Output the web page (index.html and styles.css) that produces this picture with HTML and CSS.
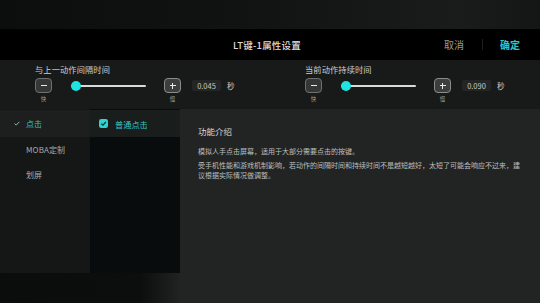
FILE: index.html
```html
<!DOCTYPE html>
<html lang="zh">
<head>
<meta charset="utf-8">
<link rel="stylesheet" href="styles.css">
</head>
<body>
<div class="top"></div>
<div class="header">
  <div></div>
  <div class="title">LT键-1属性设置</div>
  <div class="actions">
    <span class="cancel">取消</span>
    <span class="divider"></span>
    <span class="ok">确定</span>
  </div>
</div>
<div class="sliders">
  <div class="group">
    <div class="label">与上一动作间隔时间</div>
    <div class="controls">
      <div class="btncol"><div class="btn minus"><span></span></div><div class="hint">快</div></div>
      <div class="track"><div class="line"></div><div class="thumb"></div></div>
      <div class="btncol"><div class="btn plus"><span></span></div><div class="hint">慢</div></div>
      <div class="value">0.045</div>
      <div class="unit">秒</div>
    </div>
  </div>
  <div class="group">
    <div class="label">当前动作持续时间</div>
    <div class="controls">
      <div class="btncol"><div class="btn minus"><span></span></div><div class="hint">快</div></div>
      <div class="track"><div class="line"></div><div class="thumb"></div></div>
      <div class="btncol"><div class="btn plus"><span></span></div><div class="hint">慢</div></div>
      <div class="value">0.090</div>
      <div class="unit">秒</div>
    </div>
  </div>
</div>
<div class="main">
  <div class="side">
    <div class="panels">
      <div class="menu">
        <div class="mrow active">
          <svg class="check" width="6" height="5" viewBox="0 0 6 5"><polyline points="0.6,2.6 2.2,4.1 5.4,0.8" fill="none" stroke="#8fb3b0" stroke-width="1"/></svg>
          <span>点击</span>
        </div>
        <div class="mrow"><span>MOBA定制</span></div>
        <div class="mrow"><span>划屏</span></div>
      </div>
      <div class="sub">
        <div class="srow">
          <span class="box"><svg width="9" height="9" viewBox="0 0 9 9"><rect x="0" y="0" width="9" height="9" rx="2.2" fill="#2fd3d3"/><polyline points="2.2,4.6 3.9,6.2 6.9,3" fill="none" stroke="#0e2a2a" stroke-width="1.2"/></svg></span>
          <span>普通点击</span>
        </div>
      </div>
    </div>
    <div class="foot"></div>
  </div>
  <div class="info">
    <div class="info-title">功能介绍</div>
    <p class="p1">模拟人手点击屏幕，适用于大部分需要点击的按键。</p>
    <p class="p2">受手机性能和游戏机制影响，若动作的间隔时间和持续时间不是越短越好，太短了可能会响应不过来，建议根据实际情况做调整。</p>
  </div>
</div>
</body>
</html>
```
FILE: styles.css
```css
* { box-sizing: border-box; }
html, body { margin: 0; padding: 0; }
body {
  width: 540px;
  height: 303px;
  overflow: hidden;
  background: #222423;
  font-family: "Noto Sans CJK SC", "Noto Sans", sans-serif;
  color: #ccc;
}
.top {
  height: 29px;
  background: linear-gradient(90deg, #0c0e0e 0%, #111313 45%, #1a1c1c 85%, #141616 100%);
}
.header {
  height: 31px;
  background: #000;
  display: grid;
  grid-template-columns: 1fr auto 1fr;
  align-items: center;
}
.title {
  font-size: 9.5px;
  color: #dcdcdc;
  letter-spacing: 0.2px;
  margin-right: 6px;
  font-weight: 500;
}
.actions {
  display: flex;
  justify-content: flex-end;
  align-items: center;
  padding-right: 20px;
  font-size: 10px;
}
.cancel { color: #9a9a9a; }
.divider {
  width: 1px;
  height: 11px;
  background: #1f1f1f;
  margin: 0 17px 0 18px;
}
.ok { color: #2fc6c6; font-weight: 700; }

.sliders {
  height: 49px;
  background: #171a19;
  display: flex;
}
.group {
  width: 270px;
  padding: 4px 0 0 35px;
}
.label {
  font-size: 8.2px;
  line-height: 10px;
  color: #d0d0d0;
  letter-spacing: 0.15px;
}
.controls {
  display: flex;
  align-items: flex-start;
  margin-top: 4px;
}
.btncol {
  width: 17px;
  display: flex;
  flex-direction: column;
  align-items: center;
}
.btn {
  width: 17px;
  height: 15px;
  border-radius: 4px;
  border: 1px solid #6e7070;
  background: #353737;
  position: relative;
}
.btn span {
  position: absolute;
  left: 4.5px;
  top: 6px;
  width: 6px;
  height: 1.2px;
  background: #e8e8e8;
}
.plus span::after {
  content: "";
  position: absolute;
  left: 2.4px;
  top: -2.4px;
  width: 1.2px;
  height: 6px;
  background: #e8e8e8;
}
.plus { border-color: #8a8c8c; background: #3c3e3e; }
.hint {
  font-size: 5.5px;
  line-height: 8px;
  margin-top: 2px;
  color: #9a9a9a;
}
.track {
  width: 75px;
  height: 15px;
  margin: 0 18px 0 19px;
  position: relative;
  display: flex;
  align-items: center;
}
.line {
  width: 100%;
  height: 2px;
  background: #d9d9d9;
  border-radius: 1px;
}
.thumb {
  position: absolute;
  left: 0;
  top: 2.5px;
  width: 10px;
  height: 10px;
  border-radius: 50%;
  background: #1de3e3;
}
.value {
  margin: 2px 0 0 11px;
  width: 29px;
  height: 11px;
  background: #232625;
  border-radius: 2px;
  font-size: 7.5px;
  line-height: 11px;
  text-align: center;
  color: #c8c8c8;
}
.unit {
  margin: 2px 0 0 6px;
  font-size: 7.5px;
  line-height: 11px;
  color: #cfcfcf;
}

.main {
  display: flex;
  height: 194px;
}
.side {
  width: 180px;
  display: flex;
  flex-direction: column;
}
.panels {
  height: 164px;
  display: flex;
}
.menu {
  width: 90px;
  background: #151716;
  padding-top: 1px;
}
.mrow {
  height: 25px;
  display: flex;
  align-items: center;
  padding-left: 26px;
  font-size: 8px;
  color: #a9a9a9;
  position: relative;
  letter-spacing: 0.1px;
}
.mrow.active {
  height: 27px;
  background: #1c1f1e;
  color: #35c2c2;
}
.check {
  position: absolute;
  left: 14px;
  top: 11px;
}
.sub {
  width: 90px;
  background: #090c0c;
  padding-top: 1px;
}
.srow {
  height: 27px;
  background: #191d1c;
  display: flex;
  align-items: center;
  padding-left: 9px;
  font-size: 8.2px;
  color: #35c6c6;
}
.box {
  display: flex;
  margin: 0 7px 0 0;
}
.foot {
  flex: 1;
  background: linear-gradient(90deg, #0b0d0c 0%, #0c0e0d 78%, #1c1e1d 95%, #212322 100%);
}
.info {
  flex: 1;
  background: #222423;
  padding: 17px 18px 0 18px;
}
.info-title {
  font-size: 8.5px;
  line-height: 10px;
  color: #dadada;
}
.info p {
  margin: 0;
  font-size: 7px;
  line-height: 10.5px;
  color: #bdbdbd;
}
.p1 { margin-top: 10px !important; }
.p2 { margin-top: 3px !important; }
```
